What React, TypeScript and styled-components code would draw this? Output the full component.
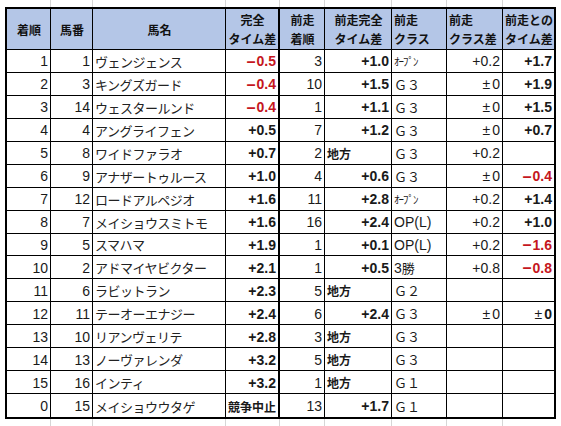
import styled, { createGlobalStyle } from "styled-components";

const GlobalStyle = createGlobalStyle`
  html, body {
    margin: 0;
    padding: 0;
    background: #fff;
  }
  body {
    font-family: "Liberation Sans", Arial, sans-serif;
    color: #000;
  }
`;

const COLS = "44px 42px 133px 54px 45px 67px 55px 56px 51px";
const JP = `"Noto Sans CJK JP", "Noto Sans", sans-serif`;

type Align = "left" | "right" | "center";

interface Race {
  rank: string;
  no: string;
  name: string;
  time: string;
  prevRank: string;
  prevTime: string;
  cls: string;
  clsDiff: string;
  diff: string;
}

const races: Race[] = [
  { rank: "1", no: "1", name: "ヴェンジェンス", time: "-0.5", prevRank: "3", prevTime: "+1.0", cls: "ｵｰﾌﾟﾝ", clsDiff: "+0.2", diff: "+1.7" },
  { rank: "2", no: "3", name: "キングズガード", time: "-0.4", prevRank: "10", prevTime: "+1.5", cls: "Ｇ３", clsDiff: "±0", diff: "+1.9" },
  { rank: "3", no: "14", name: "ウェスタールンド", time: "-0.4", prevRank: "1", prevTime: "+1.1", cls: "Ｇ３", clsDiff: "±0", diff: "+1.5" },
  { rank: "4", no: "4", name: "アングライフェン", time: "+0.5", prevRank: "7", prevTime: "+1.2", cls: "Ｇ３", clsDiff: "±0", diff: "+0.7" },
  { rank: "5", no: "8", name: "ワイドファラオ", time: "+0.7", prevRank: "2", prevTime: "地方", cls: "Ｇ３", clsDiff: "+0.2", diff: "" },
  { rank: "6", no: "9", name: "アナザートゥルース", time: "+1.0", prevRank: "4", prevTime: "+0.6", cls: "Ｇ３", clsDiff: "±0", diff: "-0.4" },
  { rank: "7", no: "12", name: "ロードアルペジオ", time: "+1.6", prevRank: "11", prevTime: "+2.8", cls: "ｵｰﾌﾟﾝ", clsDiff: "+0.2", diff: "+1.4" },
  { rank: "8", no: "7", name: "メイショウスミトモ", time: "+1.6", prevRank: "16", prevTime: "+2.4", cls: "OP(L)", clsDiff: "+0.2", diff: "+1.0" },
  { rank: "9", no: "5", name: "スマハマ", time: "+1.9", prevRank: "1", prevTime: "+0.1", cls: "OP(L)", clsDiff: "+0.2", diff: "-1.6" },
  { rank: "10", no: "2", name: "アドマイヤビクター", time: "+2.1", prevRank: "1", prevTime: "+0.5", cls: "3勝", clsDiff: "+0.8", diff: "-0.8" },
  { rank: "11", no: "6", name: "ラビットラン", time: "+2.3", prevRank: "5", prevTime: "地方", cls: "Ｇ２", clsDiff: "", diff: "" },
  { rank: "12", no: "11", name: "テーオーエナジー", time: "+2.4", prevRank: "6", prevTime: "+2.4", cls: "Ｇ３", clsDiff: "±0", diff: "±0" },
  { rank: "13", no: "10", name: "リアンヴェリテ", time: "+2.8", prevRank: "3", prevTime: "地方", cls: "Ｇ３", clsDiff: "", diff: "" },
  { rank: "14", no: "13", name: "ノーヴァレンダ", time: "+3.2", prevRank: "5", prevTime: "地方", cls: "Ｇ３", clsDiff: "", diff: "" },
  { rank: "15", no: "16", name: "インティ", time: "+3.2", prevRank: "1", prevTime: "地方", cls: "Ｇ１", clsDiff: "", diff: "" },
  { rank: "0", no: "15", name: "メイショウウタゲ", time: "競争中止", prevRank: "13", prevTime: "+1.7", cls: "Ｇ１", clsDiff: "", diff: "" },
];

const headers: { lines: string[]; align: Align }[] = [
  { lines: ["着順"], align: "center" },
  { lines: ["馬番"], align: "center" },
  { lines: ["馬名"], align: "center" },
  { lines: ["完全", "タイム差"], align: "center" },
  { lines: ["前走", "着順"], align: "center" },
  { lines: ["前走完全", "タイム差"], align: "center" },
  { lines: ["前走", "クラス"], align: "left" },
  { lines: ["前走", "クラス差"], align: "left" },
  { lines: ["前走との", "タイム差"], align: "left" },
];

function App() {
  return (
    <>
      <GlobalStyle />
      <Page>
        <Gridlines>
          {headers.map((_, i) => (
            <GhostCell key={i} />
          ))}
        </Gridlines>
        <Sheet>
          {headers.map((h, i) => (
            <HeadCell key={i} $align={h.align} $col={i}>
              {h.lines.map((l) => (
                <span key={l}>{l}</span>
              ))}
            </HeadCell>
          ))}
          {races.map((r, ri) => {
            const last = ri === races.length - 1;
            return [
              <Cell key={`${ri}a`} $col={0} $last={last} $align="right">{r.rank}</Cell>,
              <Cell key={`${ri}b`} $col={1} $last={last} $align="right">{r.no}</Cell>,
              <Cell key={`${ri}c`} $col={2} $last={last} $align="left">
                <Name>{r.name}</Name>
              </Cell>,
              <Cell key={`${ri}d`} $col={3} $last={last} $align="right" $bold>
                <Value v={r.time} />
              </Cell>,
              <Cell key={`${ri}e`} $col={4} $last={last} $align="right">{r.prevRank}</Cell>,
              <Cell key={`${ri}f`} $col={5} $last={last} $align={r.prevTime === "地方" ? "left" : "right"} $bold>
                <Value v={r.prevTime} />
              </Cell>,
              <Cell key={`${ri}g`} $col={6} $last={last} $align="left">
                <ClassName v={r.cls} />
              </Cell>,
              <Cell key={`${ri}h`} $col={7} $last={last} $align="right">
                <Value v={r.clsDiff} />
              </Cell>,
              <Cell key={`${ri}i`} $col={8} $last={last} $align="right" $bold>
                <Value v={r.diff} />
              </Cell>,
            ];
          })}
        </Sheet>
        <Gridlines>
          {headers.map((_, i) => (
            <GhostCell key={i} />
          ))}
        </Gridlines>
      </Page>
    </>
  );
}

function Value({ v }: { v: string }) {
  if (!v) return null;
  if (v.startsWith("-")) {
    return (
      <Red>
        <Minus>−</Minus>
        {v.slice(1)}
      </Red>
    );
  }
  if (v.startsWith("±")) {
    return (
      <>
        <PlusMinus>±</PlusMinus>
        {v.slice(1)}
      </>
    );
  }
  if (/[^\x00-\x7f]/.test(v)) return <Kanji>{v}</Kanji>;
  return <>{v}</>;
}

function ClassName({ v }: { v: string }) {
  if (v === "ｵｰﾌﾟﾝ") return <HalfKana>{v}</HalfKana>;
  if (v.startsWith("Ｇ")) return <Grade>{v}</Grade>;
  if (v === "3勝") return <>3<Grade>勝</Grade></>;
  return <>{v}</>;
}

export default App;

const Page = styled.div`
  padding-left: 5px;
  width: 556px;
`;

const Gridlines = styled.div`
  display: grid;
  grid-template-columns: ${COLS};
  height: 7px;
  margin-left: 2px;
`;

const GhostCell = styled.div`
  border-right: 1px solid #d6d6d6;
  &:last-child {
    border-right: none;
  }
`;

const Sheet = styled.div`
  display: grid;
  grid-template-columns: ${COLS};
  grid-template-rows: 41px repeat(16, 1fr);
  width: 547px;
  height: 408px;
  border: 2px solid #000;
`;

const rightBorder = (col: number) =>
  col === 8 ? "none" : col === 3 ? "2px solid #000" : "1px solid #000";

const HeadCell = styled.div<{ $align: Align; $col: number }>`
  box-sizing: border-box;
  background: #b4c6e7;
  border-right: ${(p) => rightBorder(p.$col)};
  border-bottom: 1px solid #000;
  display: flex;
  flex-direction: column;
  justify-content: center;
  align-items: ${(p) =>
    p.$align === "left" ? "flex-start" : p.$align === "right" ? "flex-end" : "center"};
  padding: 0 1px 0 2px;
  font-family: ${JP};
  font-weight: 700;
  font-size: 12px;
  line-height: 19px;
  color: #111;
  white-space: nowrap;
  overflow: hidden;
`;

const Cell = styled.div<{ $align: Align; $col: number; $last: boolean; $bold?: boolean }>`
  box-sizing: border-box;
  border-right: ${(p) => rightBorder(p.$col)};
  border-bottom: ${(p) => (p.$last ? "none" : "1px solid #000")};
  display: flex;
  align-items: center;
  justify-content: ${(p) =>
    p.$align === "left" ? "flex-start" : p.$align === "right" ? "flex-end" : "center"};
  padding: 1px 2px 0 2px;
  font-size: 14px;
  font-weight: ${(p) => (p.$bold ? 700 : 400)};
  color: #1a1a1a;
  white-space: nowrap;
  overflow: hidden;
`;

const Name = styled.span`
  font-family: ${JP};
  font-size: 13px;
  letter-spacing: -0.5px;
  color: #222;
`;

const Red = styled.span`
  color: #c5161d;
  display: inline-flex;
  align-items: center;
`;

const Minus = styled.span`
  font-family: ${JP};
  font-weight: 900;
  font-size: 15px;
  margin-right: 1px;
`;

const PlusMinus = styled.span`
  font-weight: 400;
  margin-right: 2px;
`;

const Kanji = styled.span`
  font-family: ${JP};
  font-size: 12px;
  font-weight: 700;
`;

const HalfKana = styled.span`
  font-family: ${JP};
  font-size: 11px;
  letter-spacing: -1px;
`;

const Grade = styled.span`
  font-family: ${JP};
  font-size: 13px;
  font-weight: 400;
`;
